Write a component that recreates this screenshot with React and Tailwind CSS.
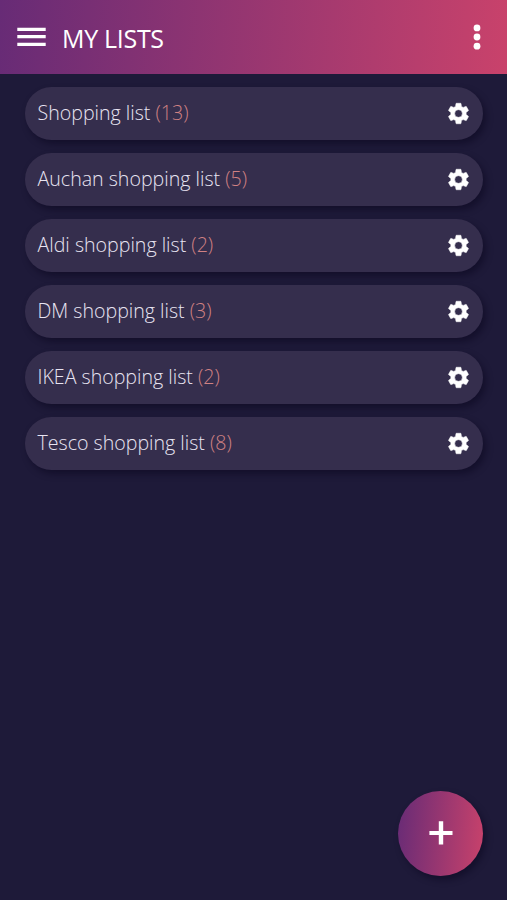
const lists = [
  { name: 'Shopping list', count: 13 },
  { name: 'Auchan shopping list', count: 5 },
  { name: 'Aldi shopping list', count: 2 },
  { name: 'DM shopping list', count: 3 },
  { name: 'IKEA shopping list', count: 2 },
  { name: 'Tesco shopping list', count: 8 },
];

function MenuIcon() {
  return (
    <svg className="block" width="29" height="20" viewBox="0 0 29 20" fill="#fff">
      <path d="M0.3 0.7h28.4v3.2H0.3zM0.3 8.1h28.4v3.2H0.3zM0.3 15.7h28.4v3.2H0.3z" />
    </svg>
  );
}

function MoreIcon() {
  return (
    <svg className="block" width="8" height="26" viewBox="0 0 8 26" fill="#fff">
      <circle cx="4" cy="3.9" r="3.4" />
      <circle cx="4" cy="13" r="3.4" />
      <circle cx="4" cy="22.2" r="3.4" />
    </svg>
  );
}

function GearIcon() {
  return (
    <svg className="block" width="25" height="25" viewBox="-0.2 -0.2 24.4 24.4" fill="#fff" stroke="#fff" strokeWidth="0.5" strokeLinejoin="round">
      <path d="M19.43 12.98c.04-.32.07-.64.07-.98s-.03-.66-.07-.98l2.11-1.65c.19-.15.24-.42.12-.64l-2-3.46c-.12-.22-.39-.3-.61-.22l-2.49 1c-.52-.4-1.08-.73-1.69-.98l-.38-2.65C14.46 2.18 14.25 2 14 2h-4c-.25 0-.46.18-.49.42l-.38 2.65c-.61.25-1.17.59-1.69.98l-2.49-1c-.23-.09-.49 0-.61.22l-2 3.46c-.13.22-.07.49.12.64l2.11 1.65c-.04.32-.07.65-.07.98s.03.66.07.98l-2.11 1.65c-.19.15-.24.42-.12.64l2 3.46c.12.22.39.3.61.22l2.49-1c.52.4 1.08.73 1.69.98l.38 2.65c.03.24.24.42.49.42h4c.25 0 .46-.18.49-.42l.38-2.65c.61-.25 1.17-.59 1.69-.98l2.49 1c.23.09.49 0 .61-.22l2-3.46c.12-.22.07-.49-.12-.64l-2.11-1.65zM12 15.75a3.75 3.75 0 1 1 0-7.5 3.75 3.75 0 0 1 0 7.5z" />
    </svg>
  );
}

function ListRow({ name, count }) {
  return (
    <li className="flex h-[53.4px] items-center justify-between rounded-full bg-[#352e4d] pr-3 pl-[12.5px] shadow-[3px_4px_6px_rgba(10,5,30,0.5)]">
      <span className="-mt-0.5 text-[19.6px] leading-7 font-light text-[#e8e4f2]">
        {name} <span className="text-[#d08183]">({count})</span>
      </span>
      <button aria-label="List settings">
        <GearIcon />
      </button>
    </li>
  );
}

export default function App() {
  return (
    <div className="flex h-[900px] w-full flex-col bg-[#1e1a39] font-['Open_Sans','Noto_Sans',sans-serif]">
      <header className="flex h-[74px] shrink-0 items-center bg-[linear-gradient(95deg,#672b76,#c9426b)] pr-[26px] pl-[17px] text-white">
        <button aria-label="Menu">
          <MenuIcon />
        </button>
        <h1 className="mt-0.5 ml-4 text-[25px] leading-8 tracking-[-0.3px]">MY LISTS</h1>
        <button className="ml-auto" aria-label="More">
          <MoreIcon />
        </button>
      </header>
      <ul className="flex flex-col gap-[12.6px] pt-[13px] pr-6 pl-[25px]">
        {lists.map((list) => (
          <ListRow key={list.name} name={list.name} count={list.count} />
        ))}
      </ul>
      <button
        aria-label="Add list"
        className="mt-auto mr-6 mb-6 flex size-[85px] items-center justify-center self-end rounded-full bg-[linear-gradient(95deg,#672b76,#c9426b)] pb-px shadow-[3px_4px_6px_rgba(10,5,30,0.5)]"
      >
        <svg className="block" width="24" height="24" viewBox="0 0 24 24" fill="#fff">
          <path d="M9.8 0.3h4.4v9.6h9.3v4.2h-9.3v9.4H9.8v-9.4H0.4V9.9h9.4z" />
        </svg>
      </button>
    </div>
  );
}
